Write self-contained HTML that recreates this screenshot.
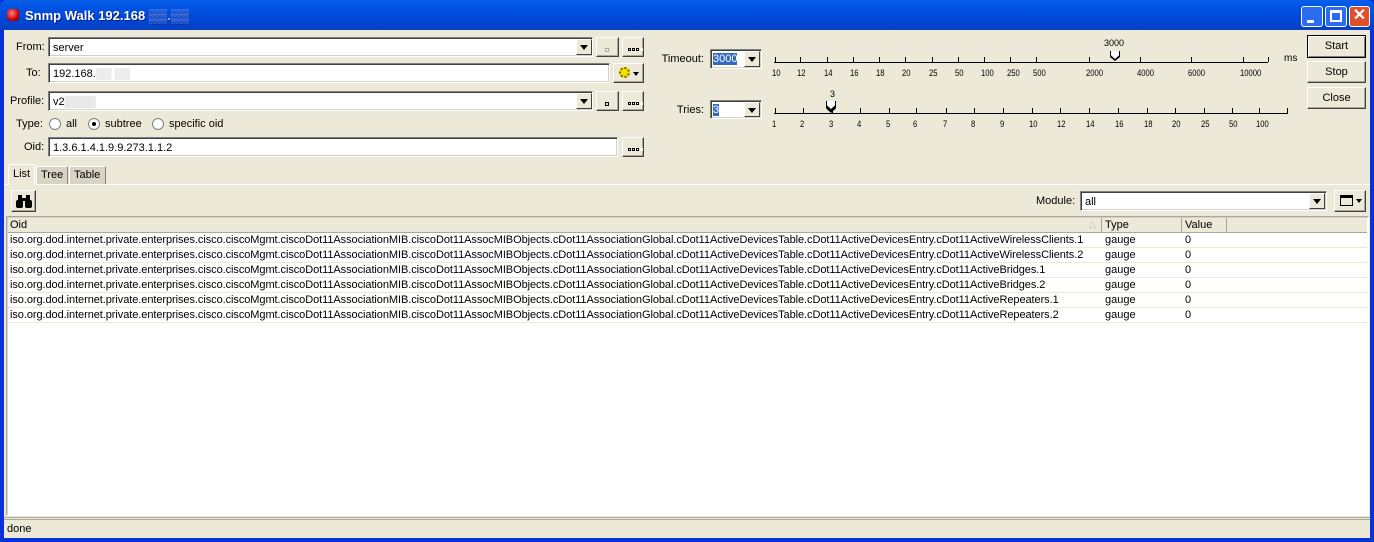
<!DOCTYPE html>
<html><head><meta charset="utf-8"><style>
*{box-sizing:border-box;margin:0;padding:0}
body{width:1374px;height:542px;overflow:hidden;font:11px "Liberation Sans",sans-serif;color:#000;background:#0831d9;position:relative}
.a{position:absolute}
#title{left:0;top:0;width:1374px;height:30px;background:linear-gradient(#0a5fe8,#0055e5 20%,#0046d5 70%,#0a3fc0);border-radius:7px 7px 0 0}
#client{left:4px;top:30px;width:1366px;height:508px;background:#ece9d8}
.in{position:absolute;background:#fff;border:1px solid #808080;border-right-color:#fff;border-bottom-color:#fff;box-shadow:inset 1px 1px 0 #404040,inset -1px -1px 0 #d4d0c8;padding:4px 0 0 4px;white-space:nowrap;line-height:12px}
.dd{position:absolute;width:16px;background:#ece9d8;border:1px solid;border-color:#fff #404040 #404040 #fff}
.dd:after{content:"";position:absolute;left:3px;top:5px;border:4px solid transparent;border-top:5px solid #000;border-bottom:0}
.btn{position:absolute;background:#ece9d8;border:1px solid;border-color:#fff #404040 #404040 #fff;box-shadow:inset -1px -1px 0 #aca899;text-align:center}
.d3{position:absolute;left:5px;top:10px;width:3px;height:3px;border:1px solid #000;box-shadow:4px 0 0 0 #fff}
.lbl{position:absolute;white-space:nowrap}
.tick{position:absolute;width:1px;height:5px;background:#000}
.tl{position:absolute;font-size:9px;transform:translateX(-2px) scaleX(0.85);transform-origin:left}
.radio{position:absolute;width:12px;height:12px;border-radius:50%;border:1px solid #7f7f7f;background:#fff}
.thumb{position:absolute;width:10px;height:10px;background:#000;clip-path:polygon(0 0,100% 0,100% 60%,50% 100%,0 60%)}
.thumb:after{content:"";position:absolute;left:1px;top:0;width:8px;height:8px;background:#fff;clip-path:polygon(0 0,100% 0,100% 55%,50% 100%,0 55%)}
</style></head><body>
<div id="title" class="a">
 <div class="a" style="left:7px;top:9px;width:12px;height:12px;border-radius:3px;background:radial-gradient(circle at 40% 35%,#ff8080,#d00000 60%,#600);"></div>
 <div class="a" style="left:25px;top:8px;color:#fff;font-weight:bold;font-size:13px;text-shadow:1px 1px #0a1e80">Snmp Walk 192.168 <span style="color:#9ab0f0">▒▒.▒▒</span></div>
 <div class="a" style="left:1301px;top:6px;width:22px;height:21px;border:1px solid #fff;border-radius:3px;background:#2a6cf0"><div class="a" style="left:5px;top:13px;width:7px;height:3px;background:#fff"></div></div>
 <div class="a" style="left:1325px;top:6px;width:22px;height:21px;border:1px solid #fff;border-radius:3px;background:#2a6cf0"><div class="a" style="left:4px;top:3px;width:12px;height:12px;border:2px solid #fff;border-top-width:3px"></div></div>
 <div class="a" style="left:1349px;top:6px;width:21px;height:21px;border:1px solid #fff;border-radius:3px;background:#e0502a;color:#fff;font-weight:bold;font-size:16px;line-height:18px;text-align:center">✕</div>
</div>
<div id="client" class="a"></div>

<div class="lbl" style="left:16px;top:41px">From:</div>
<div class="in" style="left:48px;top:37px;width:545px;height:20px">server</div>
<div class="dd" style="left:576px;top:39px;height:16px"></div>
<div class="btn" style="left:596px;top:37px;width:23px;height:20px"><div class="a" style="left:8px;top:10px;width:4px;height:4px;border:1px solid #aaa"></div></div>
<div class="btn" style="left:622px;top:37px;width:22px;height:20px"><div class="d3"></div><div class="d3" style="left:9px"></div><div class="d3" style="left:13px"></div></div>

<div class="lbl" style="left:26px;top:67px">To:</div>
<div class="in" style="left:48px;top:63px;width:562px;height:20px">192.168.<span style="color:#bbb">▒▒ ▒▒</span></div>
<div class="btn" style="left:613px;top:63px;width:31px;height:20px"><div class="a" style="left:5px;top:3px;width:11px;height:11px;border-radius:50%;background:#f0e000;border:2px dotted #806000"></div><div class="a" style="left:19px;top:8px;border:3px solid transparent;border-top:4px solid #000"></div></div>

<div class="lbl" style="left:10px;top:95px">Profile:</div>
<div class="in" style="left:48px;top:91px;width:545px;height:20px">v2<span style="color:#aaa">▒▒▒▒</span></div>
<div class="dd" style="left:576px;top:93px;height:16px"></div>
<div class="btn" style="left:596px;top:91px;width:23px;height:20px"><div class="a" style="left:8px;top:10px;width:4px;height:4px;border:1px solid #000"></div></div>
<div class="btn" style="left:622px;top:91px;width:22px;height:20px"><div class="d3"></div><div class="d3" style="left:9px"></div><div class="d3" style="left:13px"></div></div>

<div class="lbl" style="left:16px;top:118px">Type:</div>
<div class="radio" style="left:49px;top:118px"></div><div class="lbl" style="left:66px;top:118px">all</div>
<div class="radio" style="left:88px;top:118px"><div class="a" style="left:3px;top:3px;width:4px;height:4px;background:#000;border-radius:50%"></div></div><div class="lbl" style="left:105px;top:118px">subtree</div>
<div class="radio" style="left:152px;top:118px"></div><div class="lbl" style="left:169px;top:118px">specific oid</div>

<div class="lbl" style="left:24px;top:141px">Oid:</div>
<div class="in" style="left:48px;top:137px;width:570px;height:20px">1.3.6.1.4.1.9.9.273.1.1.2</div>
<div class="btn" style="left:622px;top:137px;width:22px;height:20px"><div class="d3"></div><div class="d3" style="left:9px"></div><div class="d3" style="left:13px"></div></div>

<div class="lbl" style="left:640px;width:64px;text-align:right;top:53px">Timeout:</div>
<div class="in" style="left:710px;top:49px;width:52px;height:20px;padding:3px 0 0 2px"><span style="background:#316ac5;color:#fff">3000</span></div>
<div class="dd" style="left:744px;top:51px;height:16px"></div>
<div class="lbl" style="left:640px;width:64px;text-align:right;top:104px">Tries:</div>
<div class="in" style="left:710px;top:100px;width:52px;height:19px;padding:3px 0 0 2px"><span style="background:#316ac5;color:#fff">3</span></div>
<div class="dd" style="left:744px;top:102px;height:15px"></div>

<div class="a" style="left:774px;top:62px;width:494px;height:1px;background:#000"></div>
<div class="a" style="left:774px;top:113px;width:514px;height:1px;background:#000"></div>
<div class="lbl" style="left:1104px;top:38px;font-size:9px">3000</div>
<div class="thumb" style="left:1110px;top:51px"></div>
<div class="lbl" style="left:830px;top:89px;font-size:9px">3</div>
<div class="thumb" style="left:826px;top:101px;height:12px"></div>
<div class="lbl" style="left:1284px;top:53px;font-size:10px">ms</div>

<div id="ticks"></div>
<script>
var t=[[775,"10"],[800,"12"],[827,"14"],[853,"16"],[879,"18"],[905,"20"],[932,"25"],[958,"50"],[984,"100"],[1010,"250"],[1036,"500"],[1089,"2000"],[1140,"4000"],[1191,"6000"],[1243,"10000"],[1268,""]];
var r=[[775,"1"],[803,"2"],[832,"3"],[860,"4"],[889,"5"],[916,"6"],[946,"7"],[974,"8"],[1003,"9"],[1032,"10"],[1060,"12"],[1089,"14"],[1118,"16"],[1147,"18"],[1175,"20"],[1204,"25"],[1232,"50"],[1259,"100"],[1287,""]];
var h="";
t.forEach(function(e){h+='<div class="tick" style="left:'+e[0]+'px;top:57px"></div><div class="tl" style="left:'+(e[0]-1)+'px;top:68px">'+e[1]+'</div>';});
r.forEach(function(e){h+='<div class="tick" style="left:'+e[0]+'px;top:108px"></div><div class="tl" style="left:'+(e[0]-1)+'px;top:119px">'+e[1]+'</div>';});
document.getElementById("ticks").innerHTML=h;
</script>

<div class="btn" style="left:1307px;top:35px;width:59px;height:23px;line-height:21px;border-color:#000;box-shadow:inset 1px 1px 0 #fff,inset -1px -1px 0 #808080">Start</div>
<div class="btn" style="left:1307px;top:61px;width:59px;height:22px;line-height:20px">Stop</div>
<div class="btn" style="left:1307px;top:87px;width:59px;height:22px;line-height:20px">Close</div>

<div class="a" style="left:4px;top:184px;width:1366px;height:1px;background:#fff"></div>
<div class="a" style="left:8px;top:164px;width:27px;height:21px;background:#ece9d8;border:1px solid #fff;border-bottom:0;padding:3px 0 0 4px">List</div>
<div class="a" style="left:36px;top:166px;width:32px;height:18px;background:#d8d4c4;border:1px solid #fff;border-right-color:#808080;border-bottom:0;padding:2px 0 0 4px">Tree</div>
<div class="a" style="left:69px;top:166px;width:37px;height:18px;background:#d8d4c4;border:1px solid #fff;border-right-color:#808080;border-bottom:0;padding:2px 0 0 4px">Table</div>

<div class="btn" style="left:11px;top:190px;width:25px;height:22px">
 <div class="a" style="left:4px;top:9px;width:7px;height:8px;background:#000;border-radius:2px"></div>
 <div class="a" style="left:13px;top:9px;width:7px;height:8px;background:#000;border-radius:2px"></div>
 <div class="a" style="left:6px;top:4px;width:4px;height:6px;background:#000"></div>
 <div class="a" style="left:14px;top:4px;width:4px;height:6px;background:#000"></div>
 <div class="a" style="left:10px;top:7px;width:4px;height:3px;background:#000"></div>
</div>
<div class="lbl" style="left:1036px;top:195px">Module:</div>
<div class="in" style="left:1080px;top:191px;width:247px;height:20px">all</div>
<div class="dd" style="left:1309px;top:193px;height:16px"></div>
<div class="btn" style="left:1334px;top:190px;width:32px;height:22px"><div class="a" style="left:5px;top:4px;width:13px;height:11px;border:1px solid #000;border-top-width:3px"></div><div class="a" style="left:21px;top:8px;border:3px solid transparent;border-top:4px solid #000"></div></div>

<div class="a" style="left:6px;top:216px;width:1363px;height:300px;background:#fff;border:1px solid #808080;border-color:#aca899 #fff #fff #aca899;box-shadow:inset 1px 1px 0 #d4d0c8">
 <div class="a" style="left:1px;top:1px;width:1359px;height:15px;background:#ece9d8;border-bottom:1px solid #aca899"></div>
 <div class="lbl" style="left:3px;top:2px">Oid</div>
 <div class="lbl" style="left:1082px;top:2px;color:#bbb;font-size:9px">△</div>
 <div class="a" style="left:1094px;top:1px;width:1px;height:15px;background:#aca899"></div>
 <div class="lbl" style="left:1098px;top:2px">Type</div>
 <div class="a" style="left:1174px;top:1px;width:1px;height:15px;background:#aca899"></div>
 <div class="lbl" style="left:1178px;top:2px">Value</div>
 <div class="a" style="left:1219px;top:1px;width:1px;height:15px;background:#aca899"></div>
 <div id="rows"></div>
</div>
<script>
var n=["cDot11ActiveWirelessClients.1","cDot11ActiveWirelessClients.2","cDot11ActiveBridges.1","cDot11ActiveBridges.2","cDot11ActiveRepeaters.1","cDot11ActiveRepeaters.2"],h2="";
n.forEach(function(s,i){h2+='<div class="a" style="left:1px;top:'+(16+i*15)+'px;width:1359px;height:15px;border-bottom:1px solid #ece9d8;white-space:nowrap;line-height:14px"><span class="a" style="left:2px;letter-spacing:-0.07px">iso.org.dod.internet.private.enterprises.cisco.ciscoMgmt.ciscoDot11AssociationMIB.ciscoDot11AssocMIBObjects.cDot11AssociationGlobal.cDot11ActiveDevicesTable.cDot11ActiveDevicesEntry.'+s+'</span><span class="a" style="left:1097px">gauge</span><span class="a" style="left:1177px">0</span></div>';});
document.getElementById("rows").innerHTML=h2;
</script>

<div class="a" style="left:4px;top:517px;width:1366px;height:1px;background:#aca899"></div>
<div class="a" style="left:4px;top:519px;width:1366px;height:19px;border-top:1px solid #aca899;padding:3px 0 0 3px">done</div>
</body></html>
